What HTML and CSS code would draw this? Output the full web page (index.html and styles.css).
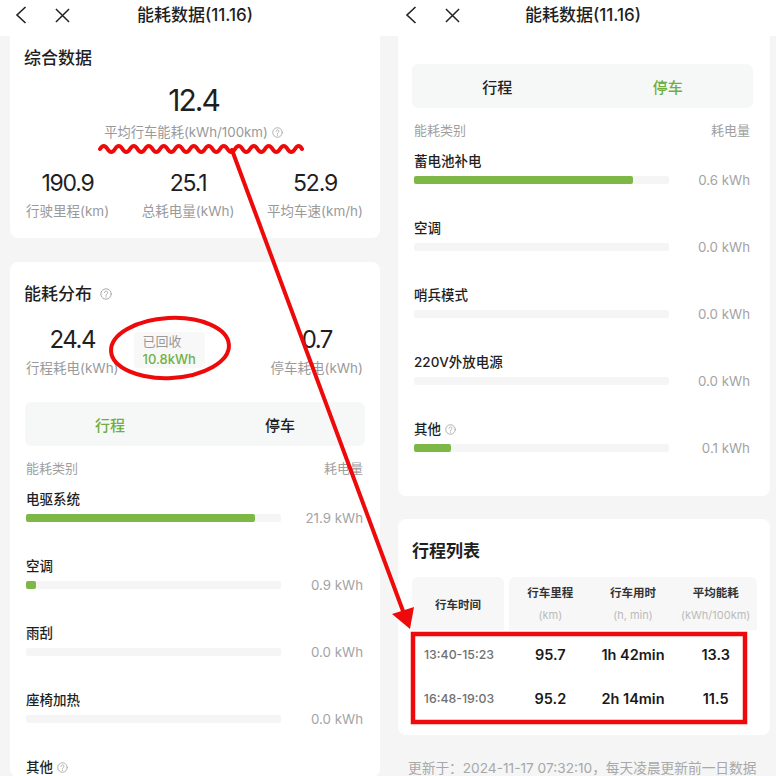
FILE: index.html
```html
<!DOCTYPE html>
<html lang="zh-CN">
<head>
    <meta charset="UTF-8">
    <meta name="viewport" content="width=device-width, initial-scale=1.0">
    <title>能耗数据</title>
    <link rel="stylesheet" href="styles.css">
</head>
<body>
<div class="screen">

    <!-- left phone: trip tab -->
    <section class="panel panel-left">
        <div class="nav">
            <div class="nav-icons">
                <svg class="ico-back" viewBox="0 0 12 18"><path d="M10.5 1L2 9l8.5 8"/></svg>
                <svg class="ico-close" viewBox="0 0 16 16"><path d="M1 1l14 14M15 1L1 15"/></svg>
            </div>
            <div class="nav-title">能耗数据(11.16)</div>
            <div></div>
        </div>

        <div class="card card-summary">
            <div class="card-title">综合数据</div>
            <div class="big">12.4</div>
            <div class="big-label">平均行车能耗(kWh/100km)
                <svg class="q" viewBox="0 0 12 12"><circle cx="6" cy="6" r="5.2"/><path d="M4.4 4.7a1.6 1.6 0 1 1 2.4 1.4c-.5.3-.8.6-.8 1.1v.3"/><circle class="dot" cx="6" cy="8.9" r=".6"/></svg>
            </div>
            <div class="stats">
                <div class="stat"><div class="stat-val">190.9</div><div class="stat-label">行驶里程(km)</div></div>
                <div class="stat"><div class="stat-val">25.1</div><div class="stat-label">总耗电量(kWh)</div></div>
                <div class="stat"><div class="stat-val">52.9</div><div class="stat-label">平均车速(km/h)</div></div>
            </div>
        </div>

        <div class="card card-dist">
            <div class="card-title">能耗分布
                <svg class="q q-title" viewBox="0 0 12 12"><circle cx="6" cy="6" r="5.2"/><path d="M4.4 4.7a1.6 1.6 0 1 1 2.4 1.4c-.5.3-.8.6-.8 1.1v.3"/><circle class="dot" cx="6" cy="8.9" r=".6"/></svg>
            </div>
            <div class="dist-stats">
                <div class="stat"><div class="stat-val">24.4</div><div class="stat-label">行程耗电(kWh)</div></div>
                <div class="recycled">
                    <div class="recycled-label">已回收</div>
                    <div class="recycled-val">10.8kWh</div>
                </div>
                <div class="stat stat-right"><div class="stat-val">0.7</div><div class="stat-label">停车耗电(kWh)</div></div>
            </div>

            <div class="tabs">
                <div class="tab active">行程</div>
                <div class="tab">停车</div>
            </div>

            <div class="list-head"><span>能耗类别</span><span>耗电量</span></div>

            <div class="item">
                <div class="item-name">电驱系统</div>
                <div class="item-bar"><div class="track"><div class="fill" style="width: 89.8%"></div></div><span class="item-val">21.9 kWh</span></div>
            </div>
            <div class="item">
                <div class="item-name">空调</div>
                <div class="item-bar"><div class="track"><div class="fill" style="width: 4%"></div></div><span class="item-val">0.9 kWh</span></div>
            </div>
            <div class="item">
                <div class="item-name">雨刮</div>
                <div class="item-bar"><div class="track"></div><span class="item-val">0.0 kWh</span></div>
            </div>
            <div class="item">
                <div class="item-name">座椅加热</div>
                <div class="item-bar"><div class="track"></div><span class="item-val">0.0 kWh</span></div>
            </div>
            <div class="item">
                <div class="item-name">其他
                    <svg class="q" viewBox="0 0 12 12"><circle cx="6" cy="6" r="5.2"/><path d="M4.4 4.7a1.6 1.6 0 1 1 2.4 1.4c-.5.3-.8.6-.8 1.1v.3"/><circle class="dot" cx="6" cy="8.9" r=".6"/></svg>
                </div>
            </div>
        </div>
    </section>

    <!-- right phone: parking tab + trip list -->
    <section class="panel panel-right">
        <div class="nav">
            <div class="nav-icons">
                <svg class="ico-back" viewBox="0 0 12 18"><path d="M10.5 1L2 9l8.5 8"/></svg>
                <svg class="ico-close" viewBox="0 0 16 16"><path d="M1 1l14 14M15 1L1 15"/></svg>
            </div>
            <div class="nav-title">能耗数据(11.16)</div>
            <div></div>
        </div>

        <div class="card card-park">
            <div class="tabs">
                <div class="tab">行程</div>
                <div class="tab active">停车</div>
            </div>

            <div class="list-head"><span>能耗类别</span><span>耗电量</span></div>

            <div class="item">
                <div class="item-name">蓄电池补电</div>
                <div class="item-bar"><div class="track"><div class="fill" style="width: 86%"></div></div><span class="item-val">0.6 kWh</span></div>
            </div>
            <div class="item">
                <div class="item-name">空调</div>
                <div class="item-bar"><div class="track"></div><span class="item-val">0.0 kWh</span></div>
            </div>
            <div class="item">
                <div class="item-name">哨兵模式</div>
                <div class="item-bar"><div class="track"></div><span class="item-val">0.0 kWh</span></div>
            </div>
            <div class="item">
                <div class="item-name">220V外放电源</div>
                <div class="item-bar"><div class="track"></div><span class="item-val">0.0 kWh</span></div>
            </div>
            <div class="item">
                <div class="item-name">其他
                    <svg class="q" viewBox="0 0 12 12"><circle cx="6" cy="6" r="5.2"/><path d="M4.4 4.7a1.6 1.6 0 1 1 2.4 1.4c-.5.3-.8.6-.8 1.1v.3"/><circle class="dot" cx="6" cy="8.9" r=".6"/></svg>
                </div>
                <div class="item-bar"><div class="track"><div class="fill" style="width: 14.5%"></div></div><span class="item-val">0.1 kWh</span></div>
            </div>
        </div>

        <div class="card card-trips">
            <div class="card-title trips-title">行程列表</div>
            <div class="trip-table">
                <div class="trip-head">
                    <div class="th-time">行车时间</div>
                    <div class="th-group">
                        <div class="th"><div class="th-name">行车里程</div><div class="th-unit">(km)</div></div>
                        <div class="th"><div class="th-name">行车用时</div><div class="th-unit">(h, min)</div></div>
                        <div class="th"><div class="th-name">平均能耗</div><div class="th-unit">(kWh/100km)</div></div>
                    </div>
                </div>
                <div class="trip-row">
                    <div class="td-time">13:40-15:23</div>
                    <div class="td-group">
                        <div class="td">95.7</div>
                        <div class="td">1h 42min</div>
                        <div class="td">13.3</div>
                    </div>
                </div>
                <div class="trip-row">
                    <div class="td-time">16:48-19:03</div>
                    <div class="td-group">
                        <div class="td">95.2</div>
                        <div class="td">2h 14min</div>
                        <div class="td">11.5</div>
                    </div>
                </div>
            </div>
        </div>

        <p class="updated">更新于：2024-11-17 07:32:10，每天凌晨更新前一日数据</p>
    </section>

    <!-- red hand-drawn annotations laid over both screenshots -->
    <svg class="marks" viewBox="0 0 776 776">
        <path d="M100 149 Q103.75 143 107.5 149 T115 149 T122.5 149 T130 149 T137.5 149 T145 149 T152.5 149 T160 149 T167.5 149 T175 149 T182.5 149 T190 149 T197.5 149 T205 149 T212.5 149 T220 149 T227.5 149 T235 149 T242.5 149 T250 149 T257.5 149 T265 149 T272.5 149 T280 149 T287.5 149 T295 149 T302 149"/>
        <ellipse cx="170" cy="348" rx="59" ry="30" transform="rotate(-3 170 348)"/>
        <line x1="232" y1="150" x2="403" y2="611"/>
        <polygon class="head" points="392,614 414,607 410,629"/>
        <rect x="413" y="634" width="332" height="88"/>
    </svg>
</div>
</body>
</html>
```

FILE: styles.css
```css
* {
    box-sizing: border-box;
}
html, body {
    margin: 0;
    padding: 0;
    width: 776px;
    height: 776px;
    overflow: hidden;
}
body {
    font-family: Inter, "Noto Sans CJK SC", sans-serif;
    color: #1f1f1f;
    background-color: #f5f5f5;
}
.screen {
    position: relative;
    display: flex;
    width: 776px;
    height: 776px;
}
.panel {
    height: 776px;
    overflow: hidden;
    background-color: #f5f5f5;
}
.panel-left {
    width: 390px;
}
.panel-right {
    width: 386px;
}

/* top bar */
.nav {
    display: grid;
    grid-template-columns: 1fr auto 1fr;
    align-items: center;
    height: 36px;
    padding-bottom: 6px;
    background-color: white;
}
.nav-icons {
    display: flex;
    align-items: center;
    padding-left: 15px;
    gap: 28px;
}
.nav-icons svg {
    fill: none;
    stroke: #222;
    stroke-width: 1.6;
}
.ico-back {
    width: 12px;
    height: 18px;
}
.ico-close {
    width: 15px;
    height: 15px;
}
.nav-title {
    font-size: 17px;
    font-weight: 500;
    line-height: 24px;
}

/* cards */
.card {
    background-color: white;
    border-radius: 8px;
}
.card-title {
    display: flex;
    align-items: center;
    font-size: 17px;
    font-weight: 500;
    line-height: 24px;
}
.q {
    width: 11px;
    height: 11px;
    margin-left: 4px;
    fill: none;
    stroke: #aaa;
    stroke-width: 1;
    stroke-linecap: round;
}
.q .dot {
    fill: #aaa;
    stroke: none;
}
.q-title {
    width: 12px;
    height: 12px;
    margin-left: 8px;
}

.card-summary {
    margin: 0 10px;
    padding: 10px 17px 18px 14px;
    border-radius: 0 0 8px 8px;
}
.big {
    margin-top: 12px;
    text-align: center;
    font-size: 30px;
    line-height: 36px;
    letter-spacing: -2px;
}
.big-label {
    display: flex;
    justify-content: center;
    align-items: center;
    margin-top: 5px;
    font-size: 13.3px;
    line-height: 18px;
    color: #999;
}
.stats {
    display: flex;
    justify-content: space-between;
    margin-top: 28px;
    padding-left: 2px;
}
.stat {
    text-align: center;
}
.stat-val {
    font-size: 23px;
    line-height: 28px;
    letter-spacing: -1.2px;
}
.stat-label {
    margin-top: 5px;
    font-size: 13.5px;
    line-height: 18px;
    color: #9a9a9a;
}

.card-dist {
    margin: 24px 10px 0;
    padding: 20px 17px 0 16px;
}
.card-dist .card-title {
    margin-left: -2px;
}
.dist-stats {
    display: flex;
    align-items: flex-start;
    margin-top: 20px;
}
.dist-stats .stat-val {
    font-size: 24px;
    letter-spacing: -1.5px;
}
.recycled {
    margin: 6px 0 0 15px;
    padding: 0 9px;
    background-color: #f8f8f8;
    border-radius: 3px;
    font-size: 13px;
    line-height: 18px;
}
.recycled-label {
    color: #999;
}
.recycled-val {
    color: #72b043;
    font-weight: 500;
}
.stat-right {
    margin-left: auto;
}

/* tabs */
.tabs {
    display: flex;
    height: 44px;
    margin: 25px -2px 0 -1px;
    background-color: #f6f8f7;
    border-radius: 6px;
}
.tab {
    flex: 1;
    display: flex;
    align-items: center;
    justify-content: center;
    font-size: 15px;
    font-weight: 500;
    color: #222;
}
.tab.active {
    color: #6fae3f;
}

/* category list */
.list-head {
    display: flex;
    justify-content: space-between;
    margin-top: 13px;
    font-size: 13px;
    line-height: 18px;
    color: #a0a0a0;
}
.item {
    margin-top: 29px;
}
.list-head + .item {
    margin-top: 12px;
}
.item-name {
    display: flex;
    align-items: center;
    font-size: 13.5px;
    font-weight: 500;
    line-height: 20px;
    color: #1f1f1f;
}
.item-bar {
    display: flex;
    align-items: center;
    height: 18px;
}
.track {
    width: 255px;
    height: 8px;
    background-color: #f5f5f5;
    border-radius: 2px;
}
.fill {
    height: 8px;
    background-color: #7db847;
    border-radius: 2px;
}
.item-val {
    flex: 1;
    text-align: right;
    font-size: 13.3px;
    color: #a3a3a3;
}

/* right column */
.card-park {
    margin: 0 6px 0 8px;
    padding: 28px 20px 39px 16px;
    border-radius: 0 0 8px 8px;
}
.card-park .tabs {
    margin: 0 -3px 0 -2px;
}

.card-trips {
    margin: 23px 6px 0 8px;
    padding: 20px 13px 15px 14px;
}
.trips-title {
    font-weight: 600;
}
.trip-table {
    margin-top: 14px;
}
.trip-head {
    display: flex;
    height: 53px;
    margin-bottom: 2px;
}
.th-time {
    display: flex;
    align-items: center;
    justify-content: center;
    width: 92px;
    background-color: #f7f7f7;
    border-radius: 6px 6px 0 0;
    font-size: 11.5px;
    font-weight: 600;
    color: #333;
}
.th-group,
.td-group {
    flex: 1;
    display: grid;
    grid-template-columns: repeat(3, 1fr);
    margin-left: 5px;
}
.th-group {
    background-color: #f7f7f7;
    border-radius: 6px 6px 0 0;
}
.th {
    padding-top: 8px;
    text-align: center;
}
.th-name {
    font-size: 11.5px;
    font-weight: 600;
    line-height: 16px;
    color: #333;
}
.th-unit {
    margin-top: 6px;
    font-size: 11px;
    line-height: 16px;
    color: #bbb;
}
.trip-row {
    display: flex;
    align-items: center;
    height: 44px;
}
.td-time {
    width: 92px;
    padding-left: 2px;
    text-align: center;
    font-size: 12.3px;
    font-weight: 500;
    color: #707070;
}
.td {
    text-align: center;
    font-size: 14.5px;
    font-weight: 600;
    color: #1a1a1a;
}
.updated {
    margin: 23px 0 0 18px;
    font-size: 13.7px;
    line-height: 20px;
    color: #a8a8a8;
    white-space: nowrap;
}

/* annotation layer */
.marks {
    position: absolute;
    top: 0;
    left: 0;
    width: 776px;
    height: 776px;
    pointer-events: none;
    fill: none;
    stroke: #ee0a0a;
    stroke-width: 4;
    stroke-linecap: round;
}
.marks .head {
    fill: #ee0a0a;
    stroke: none;
}
.marks rect {
    stroke-width: 4.5;
    stroke-linecap: butt;
}
```
